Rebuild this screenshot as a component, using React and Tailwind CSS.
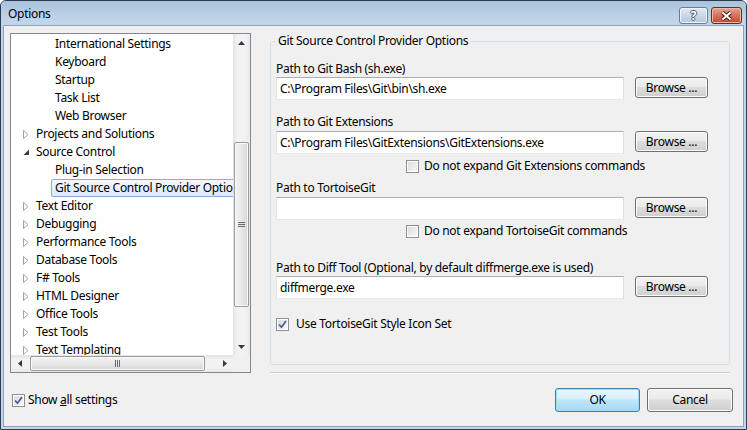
import React from 'react';

function Expander({ open }) {
  if (open)
    return (
      <svg width="7" height="7" viewBox="0 0 7 7">
        <path d="M6 0.5 L6 6 L0.5 6 Z" fill="#3c3c3c" />
      </svg>
    );
  return (
    <svg width="6" height="9" viewBox="0 0 6 9">
      <path d="M0.5 0.5 L5 4.5 L0.5 8.5 Z" fill="#ffffff" stroke="#a2a2a2" strokeWidth="1" />
    </svg>
  );
}

function Check({ checked }) {
  return (
    <div className="w-[13px] h-[13px] shrink-0 border border-[#8e8f8f] bg-white p-[1px]">
      <div className="w-full h-full bg-[linear-gradient(135deg,#dcdcdc,#f7f7f7)] flex items-center justify-center">
        {checked && (
          <svg width="9" height="9" viewBox="0 0 9 9">
            <path d="M1 4.5 L3.5 7.2 L8 1" fill="none" stroke="#4a5f97" strokeWidth="1.8" />
          </svg>
        )}
      </div>
    </div>
  );
}

function Browse() {
  return (
    <div className="w-[73px] h-[21px] ml-[11px] rounded-[3px] border border-[#707070] bg-[linear-gradient(#f2f2f2_0%,#ebebeb_45%,#dddddd_50%,#cfcfcf_100%)] shadow-[inset_0_0_0_1px_#fbfbfb] flex items-center justify-center">
      Browse ...
    </div>
  );
}

function TextBox({ value }) {
  return (
    <div className="w-[348px] h-[23px] bg-white border border-[#abadb3] border-l-[#e2e3ea] border-r-[#dbdfe6] border-b-[#e3e9ef] pl-[3px] flex items-center whitespace-nowrap overflow-hidden">
      {value}
    </div>
  );
}

const rows = [
  { t: 'International Settings', l: 2 },
  { t: 'Keyboard', l: 2 },
  { t: 'Startup', l: 2 },
  { t: 'Task List', l: 2 },
  { t: 'Web Browser', l: 2 },
  { t: 'Projects and Solutions', l: 1 },
  { t: 'Source Control', l: 1, open: true },
  { t: 'Plug-in Selection', l: 2 },
  { t: 'Git Source Control Provider Options', l: 2, sel: true },
  { t: 'Text Editor', l: 1 },
  { t: 'Debugging', l: 1 },
  { t: 'Performance Tools', l: 1 },
  { t: 'Database Tools', l: 1 },
  { t: 'F# Tools', l: 1 },
  { t: 'HTML Designer', l: 1 },
  { t: 'Office Tools', l: 1 },
  { t: 'Test Tools', l: 1 },
  { t: 'Text Templating', l: 1 },
];

function TreeRow({ r }) {
  if (r.l === 1)
    return (
      <div className="h-[18px] shrink-0 flex items-center whitespace-nowrap">
        <div className="w-[14px] ml-[11px] pl-[1px] flex items-center">
          <Expander open={r.open} />
        </div>
        <span>{r.t}</span>
      </div>
    );
  if (r.sel)
    return (
      <div className="h-[18px] shrink-0 flex items-center whitespace-nowrap">
        <div className="ml-[40px] w-[220px] shrink-0 h-[18px] rounded-[2px] border border-[#84acdd] bg-[linear-gradient(#f2f8fe,#dbeafd)] pl-[3px] flex items-center">
          {r.t}
        </div>
      </div>
    );
  return (
    <div className="h-[18px] shrink-0 flex items-center whitespace-nowrap pl-[44px]">
      {r.t}
    </div>
  );
}

function Tree() {
  return (
    <div className="w-[241px] h-[340px] shrink-0 border border-[#828790] bg-white flex flex-col">
      <div className="flex flex-1 min-h-0">
        <div className="flex-1 min-w-0 overflow-hidden pt-[1px] flex flex-col">
          {rows.map((r, i) => (
            <TreeRow key={i} r={r} />
          ))}
        </div>
        <div className="w-[17px] shrink-0 flex flex-col bg-[linear-gradient(90deg,#e3e3e3,#f2f2f2_25%,#f2f2f2_75%,#e8e8e8)]">
          <div className="h-[17px] flex items-center justify-center">
            <svg width="7" height="4" viewBox="0 0 7 4">
              <path d="M3.5 0 L7 4 L0 4 Z" fill="#3a3a3a" />
            </svg>
          </div>
          <div className="mt-[91px] mx-[1px] h-[165px] rounded-[2px] border border-[#9b9b9b] bg-[linear-gradient(90deg,#f3f3f3,#e8e8e8_50%,#d6d6d6)] shadow-[inset_0_0_0_1px_#fafafa] flex items-center justify-center">
            <div className="flex flex-col gap-[1px]">
              <div className="w-[7px] h-[1px] bg-[#6b6b6b]" />
              <div className="w-[7px] h-[1px] bg-[#6b6b6b]" />
              <div className="w-[7px] h-[1px] bg-[#6b6b6b]" />
            </div>
          </div>
          <div className="flex-1" />
          <div className="h-[17px] flex items-center justify-center">
            <svg width="7" height="4" viewBox="0 0 7 4">
              <path d="M0 0 L7 0 L3.5 4 Z" fill="#3a3a3a" />
            </svg>
          </div>
        </div>
      </div>
      <div className="h-[17px] shrink-0 flex">
        <div className="flex-1 flex items-center bg-[linear-gradient(#e3e3e3,#f2f2f2_25%,#f2f2f2_75%,#e8e8e8)]">
          <div className="w-[17px] h-[17px] flex items-center justify-center">
            <svg width="4" height="7" viewBox="0 0 4 7">
              <path d="M0 3.5 L4 0 L4 7 Z" fill="#3a3a3a" />
            </svg>
          </div>
          <div className="ml-[2px] w-[175px] h-[15px] rounded-[2px] border border-[#9b9b9b] bg-[linear-gradient(#f3f3f3,#e8e8e8_50%,#d6d6d6)] shadow-[inset_0_0_0_1px_#fafafa] flex items-center justify-center">
            <div className="flex gap-[1px]">
              <div className="w-[1px] h-[7px] bg-[#6b6b6b]" />
              <div className="w-[1px] h-[7px] bg-[#6b6b6b]" />
              <div className="w-[1px] h-[7px] bg-[#6b6b6b]" />
            </div>
          </div>
          <div className="flex-1" />
          <div className="w-[17px] h-[17px] flex items-center justify-center">
            <svg width="4" height="7" viewBox="0 0 4 7">
              <path d="M0 0 L4 3.5 L0 7 Z" fill="#3a3a3a" />
            </svg>
          </div>
        </div>
        <div className="w-[17px] bg-[#f0f0f0]" />
      </div>
    </div>
  );
}

export default function App() {
  return (
    <div className="w-[747px] h-[430px] border border-[#2c3b4f] rounded-t-[6px] bg-[#c3d6eb] flex flex-col font-['Segoe_UI','Noto_Sans',sans-serif] text-[12px] leading-[16px] tracking-[-0.3px] text-black overflow-hidden">
      <div className="h-[24px] shrink-0 flex items-center pl-[7px] pr-[4px] bg-[linear-gradient(#a9c2dc,#bcd0e7_60%,#c3d6eb)]">
        <span className="flex-1 pt-[1px]">Options</span>
        <div className="w-[29px] h-[17px] mt-[5px] rounded-[3px] border border-[#6d7c8f] bg-[linear-gradient(#e4ecf5,#c9d8ea_50%,#b3c8df)] shadow-[inset_0_0_0_1px_#eef4fa] flex items-center justify-center font-bold text-[12px] text-white [text-shadow:1px_0_#505a66,-1px_0_#505a66,0_1px_#505a66,0_-1px_#505a66]">
          ?
        </div>
        <div className="w-[31px] h-[17px] mt-[5px] ml-[3px] rounded-[3px] border border-[#6a2a1f] bg-[linear-gradient(#e8a596,#d3725f_50%,#c24a33)] shadow-[inset_0_0_0_1px_#eeb5a8] flex items-center justify-center">
          <svg width="13" height="10" viewBox="0 0 13 10">
            <path d="M2.5 1.5 L10.5 8.5 M10.5 1.5 L2.5 8.5" stroke="#4a1a12" strokeWidth="4" />
            <path d="M2.5 1.5 L10.5 8.5 M10.5 1.5 L2.5 8.5" stroke="#ffffff" strokeWidth="2" />
          </svg>
        </div>
      </div>
      <div className="flex-1 mx-[2px] mb-[2px] border border-[#8ca3be] bg-[#f0f0f0] flex flex-col">
        <div className="flex pt-[7px] pl-[6px]">
          <Tree />
          <div className="ml-[19px] w-[460px] flex flex-col">
            <fieldset className="h-[332px] border border-[#d5dfe5] rounded-[3px] px-[5px]">
              <legend className="px-[2px] leading-[16px]">Git Source Control Provider Options</legend>
              <div className="mt-[12px] h-[16px]">Path to Git Bash (sh.exe)</div>
              <div className="flex items-start">
                <TextBox value="C:\Program Files\Git\bin\sh.exe" />
                <Browse />
              </div>
              <div className="mt-[14px] h-[16px]">Path to Git Extensions</div>
              <div className="mt-[1px] flex items-start">
                <TextBox value="C:\Program Files\GitExtensions\GitExtensions.exe" />
                <Browse />
              </div>
              <div className="mt-[4px] h-[16px] flex items-center pl-[130px] gap-[5px]">
                <Check />
                <span>Do not expand Git Extensions commands</span>
              </div>
              <div className="mt-[6px] h-[16px]">Path to TortoiseGit</div>
              <div className="mt-[1px] flex items-start">
                <TextBox value="" />
                <Browse />
              </div>
              <div className="mt-[3px] h-[16px] flex items-center pl-[130px] gap-[5px]">
                <Check />
                <span>Do not expand TortoiseGit commands</span>
              </div>
              <div className="mt-[21px] h-[16px]">Path to Diff Tool (Optional, by default diffmerge.exe is used)</div>
              <div className="flex items-start">
                <TextBox value="diffmerge.exe" />
                <Browse />
              </div>
              <div className="mt-[17px] h-[16px] flex items-center gap-[7px]">
                <Check checked />
                <span>Use TortoiseGit Style Icon Set</span>
              </div>
            </fieldset>
            <div className="mt-[7px] h-[2px] border-t border-[#c4cbd2] border-b border-b-white" />
          </div>
        </div>
        <div className="flex-1 flex items-center pl-[8px] pr-[10px]">
          <div className="flex items-center gap-[3px] flex-1">
            <Check checked />
            <span>
              Show <span className="underline">a</span>ll settings
            </span>
          </div>
          <div className="w-[85px] h-[24px] rounded-[3px] border border-[#3c7fb1] bg-[linear-gradient(#eaf6fd_0%,#d9f0fc_45%,#bee6fd_50%,#a7d9f5_100%)] shadow-[inset_0_0_0_1px_#9fdcf8] flex items-center justify-center">
            OK
          </div>
          <div className="ml-[7px] w-[86px] h-[24px] rounded-[3px] border border-[#707070] bg-[linear-gradient(#f2f2f2_0%,#ebebeb_45%,#dddddd_50%,#cfcfcf_100%)] shadow-[inset_0_0_0_1px_#fbfbfb] flex items-center justify-center">
            Cancel
          </div>
        </div>
      </div>
    </div>
  );
}
